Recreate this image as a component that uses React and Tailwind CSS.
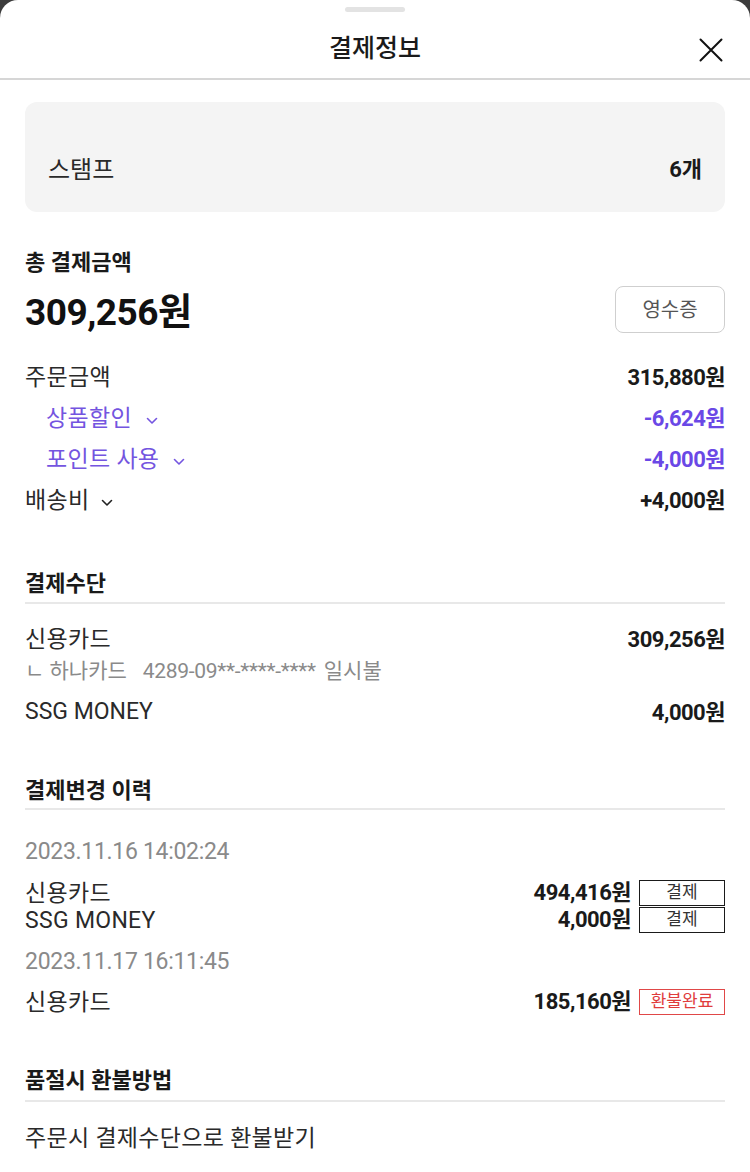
import React from "react";

const FONT = { fontFamily: 'Roboto, "Noto Sans CJK KR", sans-serif' };

function Chevron({ color = "#222", className = "ml-[14px]" }) {
  return (
    <svg width="12" height="8" viewBox="0 0 12 8" className={`${className} mt-[2px]`}>
      <polyline points="1.5,1.5 6,6 10.5,1.5" fill="none" stroke={color} strokeWidth="1.6" strokeLinecap="round" strokeLinejoin="round" />
    </svg>
  );
}

function SectionTitle({ children, className = "" }) {
  return (
    <div className={`border-b-2 border-[#e8e8e8] ${className}`}>
      <h2 className="text-[22px] leading-[28px] font-bold text-[#1a1a1a]">{children}</h2>
    </div>
  );
}

function Row({ label, value, purple, chevron, indent }) {
  const labelColor = purple ? "text-[#7455e0]" : "text-[#2a2a2a]";
  const valueColor = purple ? "text-[#6a48e6]" : "text-[#1a1a1a]";
  return (
    <div className="flex items-center justify-between h-[41px]">
      <div className={`flex items-center text-[23px] tracking-[0.3px] pt-[2px] ${labelColor} ${indent ? "pl-[21px]" : ""}`}>
        <span>{label}</span>
        {chevron && <Chevron color={purple ? "#7455e0" : "#222"} className={indent ? "ml-[14px]" : "ml-[12px]"} />}
      </div>
      <span className={`text-[22px] font-bold tracking-[-0.5px] ${valueColor}`}>{value}</span>
    </div>
  );
}

function Badge({ children, red }) {
  return (
    <span
      className={`flex items-center justify-center w-[86px] h-[26px] text-[17px] leading-none ${
        red ? "border-[1.5px] border-[#e04848] text-[#e03c3c]" : "border-[1.5px] border-[#1a1a1a] text-[#333]"
      }`}
    >
      {children}
    </span>
  );
}

function HistoryLine({ label, amount, badge, red }) {
  return (
    <div className="flex items-center justify-between h-[27px]">
      <span className="text-[23px] tracking-[0.3px] text-[#2a2a2a] pt-[4px]">{label}</span>
      <div className="flex items-center gap-[8px]">
        <span className="text-[22px] font-bold tracking-[-0.5px] text-[#1a1a1a]">{amount}</span>
        <Badge red={red}>{badge}</Badge>
      </div>
    </div>
  );
}

export default function App() {
  return (
    <div className="bg-[#3c3c3c] min-h-[1172px]" style={FONT}>
      <div className="bg-white rounded-t-[18px] min-h-[1172px]">
        <div className="pt-[7px]">
          <div className="mx-auto w-[60px] h-[5px] rounded-full bg-[#e3e3e3]" />
        </div>

        <div className="relative flex items-center justify-center h-[68px] pt-[8px] border-b-2 border-[#d6d6d6]">
          <h1 className="text-[25px] font-medium text-[#1a1a1a]">결제정보</h1>
          <button className="absolute right-[27px] top-[26px]">
            <svg width="24" height="24" viewBox="0 0 24 24">
              <path d="M1.5 1.5 L22.5 22.5 M22.5 1.5 L1.5 22.5" stroke="#111" strokeWidth="2" strokeLinecap="round" />
            </svg>
          </button>
        </div>

        <div className="px-[25px]">
          <div className="mt-[22px] h-[110px] rounded-[12px] bg-[#f4f4f4] flex items-end justify-between px-[23px] pb-[27px]">
            <span className="text-[24px] leading-[30px] text-[#2a2a2a]">스탬프</span>
            <span className="text-[22px] leading-[30px] font-bold text-[#1a1a1a]">6개</span>
          </div>

          <h2 className="mt-[37px] text-[22px] leading-[28px] font-bold text-[#1a1a1a]">총 결제금액</h2>
          <div className="mt-[9px] flex items-center justify-between">
            <span className="text-[37px] leading-[40px] font-bold text-[#111] tracking-[-0.5px] pt-[6px]">309,256원</span>
            <button className="w-[110px] h-[47px] rounded-[8px] border border-[#cfcfcf] text-[20px] text-[#555]">영수증</button>
          </div>

          <div className="mt-[24px]">
            <Row label="주문금액" value="315,880원" />
            <Row label="상품할인" value="-6,624원" purple chevron indent />
            <Row label="포인트 사용" value="-4,000원" purple chevron indent />
            <Row label="배송비" value="+4,000원" chevron />
          </div>

          <SectionTitle className="mt-[49px] pb-[4px]">결제수단</SectionTitle>
          <div className="mt-[17px]">
            <div className="flex items-center justify-between h-[36px]">
              <span className="text-[23px] tracking-[0.3px] text-[#2a2a2a] pt-[3px]">신용카드</span>
              <span className="text-[22px] font-bold tracking-[-0.5px] text-[#1a1a1a]">309,256원</span>
            </div>
            <div className="flex items-center h-[30px] text-[21px] text-[#8a8a8a]">
              <span>ㄴ 하나카드</span>
              <span className="ml-[16px] tracking-[-0.3px]">4289-09**-****-****</span>
              <span className="ml-[8px]">일시불</span>
            </div>
            <div className="mt-[7px] flex items-center justify-between h-[36px]">
              <span className="text-[23px] text-[#2a2a2a]">SSG MONEY</span>
              <span className="text-[22px] font-bold tracking-[-0.5px] text-[#1a1a1a]">4,000원</span>
            </div>
          </div>

          <SectionTitle className="mt-[47px] pb-[3px]">결제변경 이력</SectionTitle>
          <div className="mt-[26px] h-[32px] flex items-center text-[23px] text-[#8a8a8a] tracking-[-0.3px]">2023.11.16 14:02:24</div>
          <div className="mt-[11px]">
            <HistoryLine label="신용카드" amount="494,416원" badge="결제" />
            <HistoryLine label="SSG MONEY" amount="4,000원" badge="결제" />
          </div>
          <div className="mt-[13px] h-[32px] flex items-center text-[23px] text-[#8a8a8a] tracking-[-0.3px]">2023.11.17 16:11:45</div>
          <div className="mt-[10px]">
            <HistoryLine label="신용카드" amount="185,160원" badge="환불완료" red />
          </div>

          <SectionTitle className="mt-[52px] pb-[5px]">품절시 환불방법</SectionTitle>
          <div className="mt-[21px] h-[32px] flex items-center text-[23px] tracking-[0.3px] text-[#2a2a2a]">주문시 결제수단으로 환불받기</div>
        </div>
      </div>
    </div>
  );
}
